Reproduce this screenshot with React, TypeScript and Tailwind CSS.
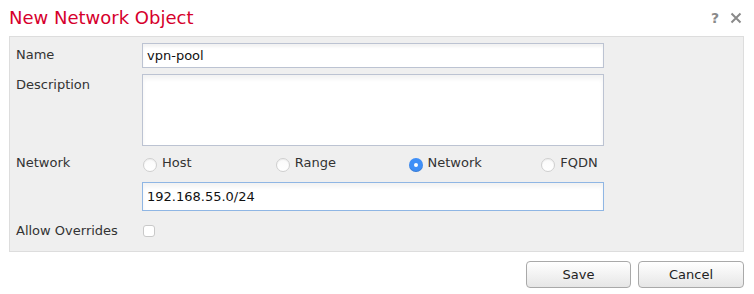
import React from "react";

function Radio({ label, checked }: { label: string; checked?: boolean }) {
  return (
    <div className="flex items-center">
      {checked ? (
        <span className="mt-[4px] flex h-[14px] w-[14px] items-center justify-center rounded-full bg-[#3f8ff7] shadow-[inset_0_-1px_1px_rgba(0,0,0,0.15)]">
          <span className="h-[4px] w-[4px] rounded-full bg-white" />
        </span>
      ) : (
        <span className="mt-[4px] h-[14px] w-[14px] rounded-full border border-[#cfcfcf] bg-gradient-to-b from-[#fafafa] to-white shadow-[inset_0_1px_1px_rgba(0,0,0,0.05)]" />
      )}
      <span className="ml-[5px] text-[13px] leading-[16px] text-[#333]">{label}</span>
    </div>
  );
}

export default function App() {
  return (
    <div
      className="h-[294px] w-[754px] bg-white"
      style={{ fontFamily: '"DejaVu Sans", Verdana, sans-serif' }}
    >
      <div className="flex h-[30px] items-start justify-between pl-[9px] pr-[12px] pt-[6px]">
        <h1 className="text-[18px] leading-[24px] text-[#d6002c]">New Network Object</h1>
        <div className="mt-[5px] flex items-center gap-[11px]">
          <span className="text-[14px] font-bold leading-[14px] text-[#8a8a8a]">?</span>
          <svg width="12" height="12" viewBox="0 0 12 12">
            <path d="M1.5 1.5 L10.5 10.5 M10.5 1.5 L1.5 10.5" stroke="#8a8a8a" strokeWidth="2" />
          </svg>
        </div>
      </div>

      <div className="ml-[9px] mr-[10px] mt-[6px] border border-[#dddddd] bg-[#efefef] pb-[12px] pl-[6px] pt-[6px]">
        {/* Name */}
        <div className="flex">
          <div className="w-[126px] pt-[4px] text-[13px] leading-[16px] text-[#333]">Name</div>
          <div className="flex h-[25px] w-[462px] items-center border border-[#bcc3d2] bg-white pl-[4px] text-[13px] text-[#111] shadow-[inset_0_3px_3px_rgba(0,0,0,0.05)]">
            vpn-pool
          </div>
        </div>
        {/* Description */}
        <div className="mt-[6px] flex">
          <div className="w-[126px] pt-[3px] text-[13px] leading-[16px] text-[#333]">Description</div>
          <div className="h-[72px] w-[462px] border border-[#bcc3d2] bg-white shadow-[inset_0_4px_4px_rgba(0,0,0,0.05)]" />
        </div>
        {/* Network radios */}
        <div className="mt-[8px] flex">
          <div className="w-[126px] pt-[1px] text-[13px] leading-[16px] text-[#333]">Network</div>
          <div className="grid w-[532px] grid-cols-4 pl-[1px]">
            <Radio label="Host" />
            <Radio label="Range" />
            <Radio label="Network" checked />
            <Radio label="FQDN" />
          </div>
        </div>
        {/* Network input */}
        <div className="mt-[10px] flex">
          <div className="w-[126px]" />
          <div className="flex h-[29px] w-[462px] items-center border border-[#8fb6e4] bg-white pl-[4px] text-[13px] text-[#111] shadow-[inset_0_4px_4px_rgba(0,0,0,0.05)]">
            192.168.55.0/24
          </div>
        </div>
        {/* Allow overrides */}
        <div className="mt-[10px] flex">
          <div className="w-[126px] pt-[2px] text-[13px] leading-[16px] text-[#333]">Allow Overrides</div>
          <div className="mt-[4px] ml-[1px] h-[12px] w-[12px] rounded-[3px] border border-[#c9c9c9] bg-white" />
        </div>
      </div>

      <div className="mr-[10px] mt-[9px] flex justify-end gap-[7px]">
        <button className="h-[27px] w-[105px] rounded-[4px] border border-[#a9a9a9] bg-gradient-to-b from-white to-[#e6e6e6] text-[13px] text-[#222]">
          Save
        </button>
        <button className="h-[27px] w-[106px] rounded-[4px] border border-[#a9a9a9] bg-gradient-to-b from-white to-[#e6e6e6] text-[13px] text-[#222]">
          Cancel
        </button>
      </div>
    </div>
  );
}
